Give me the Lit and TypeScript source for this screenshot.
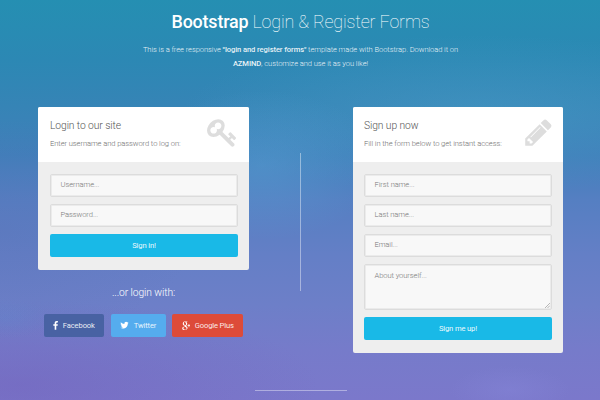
import { LitElement, html, svg, css } from "lit";
import { customElement } from "lit/decorators.js";

const KEY = svg`<path d="M832 512q0-80-56-136t-136-56-136 56-56 136q0 42 19 83-41-19-83-19-80 0-136 56t-56 136 56 136 136 56 136-56 56-136q0-42-19-83 41 19 83 19 80 0 136-56t56-136zm851 704q0 17-49 66t-66 49q-9 0-28.5-16t-36.5-33-38.5-40-24.5-26l-96 96 220 220q28 28 28 68 0 42-39 81t-81 39q-40 0-68-28l-671-671q-176 131-365 131-163 0-265.5-102.5t-102.5-265.5q0-160 95-313t248-248 313-95q163 0 265.5 102.5t102.5 265.5q0 189-131 365l355 355 96-96q-3-3-26-24.5t-40-38.5-33-36.5-16-28.5q0-17 49-66t66-49q13 0 23 10 6 6 46 44.5t82 79.5 86.5 86 73 78 28.5 41z"/>`;
const PENCIL = svg`<path d="M491 1536l91-91-235-235-91 91v107h128v128h107zm523-928q0-22-22-22-10 0-17 7l-542 542q-7 7-7 17 0 22 22 22 10 0 17-7l542-542q7-7 7-17zm-54-192l416 416-832 832h-416v-416zm683 96q0 53-37 90l-166 166-416-416 166-165q36-38 90-38 53 0 91 38l235 234q37 39 37 91z"/>`;
const FACEBOOK = svg`<path d="M1343 12v264h-157q-86 0-116 36t-30 108v189h293l-39 296h-254v759h-306v-759h-255v-296h255v-218q0-186 104-288.5t277-102.5q147 0 228 12z"/>`;
const TWITTER = svg`<path d="M1684 408q-67 98-162 167 1 14 1 42 0 130-38 259.5t-115.5 248.5-184.5 210.5-258 146-323 54.5q-271 0-496-145 35 4 78 4 225 0 401-138-105-2-188-64.5t-114-159.5q33 5 61 5 43 0 85-11-112-23-185.5-111.5t-73.5-205.5v-4q68 38 146 41-66-44-105-115t-39-154q0-88 44-163 121 149 294.5 238.5t371.5 99.5q-8-38-8-74 0-134 94.5-228.5t228.5-94.5q140 0 236 102 109-21 205-78-37 115-142 178 93-10 186-50z"/>`;

@customElement("app-root")
export class AppRoot extends LitElement {
  static styles = css`
    :host {
      display: block;
      width: 600px;
      height: 400px;
      overflow: hidden;
      font-family: Roboto, "Liberation Sans", sans-serif;
      font-weight: 300;
      font-size: 7.6px;
      letter-spacing: -0.09px;
      color: #707070;
      background:
        radial-gradient(ellipse 120px 75px at 262px 165px, rgba(92, 165, 215, 0.4), transparent),
        radial-gradient(ellipse 300px 80px at 480px 115px, rgba(78, 163, 203, 0.4), transparent),
        radial-gradient(ellipse 200px 110px at 0 230px, rgba(90, 112, 182, 0.35), transparent),
        radial-gradient(ellipse 300px 85px at 20px 385px, rgba(112, 92, 184, 0.4), transparent),
        radial-gradient(ellipse 45px 20px at 5px 318px, rgba(95, 138, 208, 0.35), transparent),
        radial-gradient(ellipse 60px 24px at 510px 390px, rgba(135, 135, 218, 0.4), transparent),
        linear-gradient(#258fb2 0, #2c88b4 60px, #3684b6 107px, #407fba 155px, #557fc2 200px, #647fc6 255px, #6d7fc8 305px, #767bca 350px, #7b78cb 400px);
    }
    * { box-sizing: border-box; }
    .page { display: flex; flex-direction: column; height: 400px; }
    h1, h2, p { margin: 0; font-weight: 300; }
    header { text-align: center; height: 107px; padding-top: 10px; color: #fff; }
    h1 { font-size: 17.9px; line-height: 24px; font-weight: 100; white-space: nowrap; letter-spacing: -0.17px; padding-left: 1px; }
    h1 b { font-weight: 500; }
    .intro { margin-top: 9px; line-height: 14px; color: rgba(255, 255, 255, 0.9); padding-left: 1px; }
    .intro b { font-weight: 500; }
    .columns { display: grid; grid-template-columns: 211px 1fr 210px; padding: 0 37px 0 38px; height: 283px; }
    .card { border-radius: 2px; background: #eee; overflow: hidden; }
    .top { background: #fff; height: 55px; padding: 11px 11px 0 12px; display: flex; justify-content: space-between; }
    h2 { font-size: 10.3px; line-height: 15px; color: #555; letter-spacing: -0.09px; }
    .top p { margin-top: 4px; line-height: 14px; white-space: nowrap; }
    .top .icon { width: 31px; height: 31px; fill: #ddd; flex: none; margin-top: -1px; }
    form { padding: 12px 11px 13px 12px; display: flex; flex-direction: column; gap: 7px; }
    .field {
      height: 23px; border: 1px solid #dcdcdc; box-shadow: inset 0 0 0 1px #ebebeb; border-radius: 2px; background: #f8f8f8;
      padding: 0 9.5px; line-height: 20px; color: #777;
    }
    .area { height: 46px; display: flex; justify-content: space-between; padding: 1px 1px 1px 9.5px; }
    .right .top { padding-left: 11px; padding-right: 9px; }
    .right form { padding-left: 11px; }
    .grip { align-self: flex-end; width: 5px; height: 5px; stroke: #999; stroke-width: 0.7; fill: none; }
    .submit {
      height: 23px; border: 0; border-radius: 2px; background: #19b9e7; color: rgba(255, 255, 255, 0.95);
      font: inherit; letter-spacing: -0.14px; font-weight: 400; padding: 0;
    }
    .divider { justify-self: center; width: 1px; height: 138px; margin: 46px 1px 0 0; background: rgba(255, 255, 255, 0.42); }
    .social { text-align: center; color: #fff; padding-top: 15px; }
    .social h2 { color: #fff; }
    .buttons { display: flex; justify-content: center; gap: 6.5px; margin-top: 14px; }
    .btn {
      height: 23px; border-radius: 2px; display: flex; align-items: center; gap: 4.5px; letter-spacing: -0.14px;
      justify-content: center; font-weight: 400; white-space: nowrap; color: rgba(255, 255, 255, 0.9);
    }
    .btn svg { height: 9.5px; fill: #fff; flex: none; margin-top: 1px; }
    .fb { width: 60.5px; background: #4862a3; }
    .tw { width: 55px; background: #55acee; }
    .gp { width: 71px; background: #dd4b39; }
    .rule { width: 92px; height: 1px; align-self: center; margin-left: 1.5px; background: rgba(255, 255, 255, 0.4); }
  `;

  field(label: string) {
    return html`<div class="field">${label}</div>`;
  }

  top(title: string, text: string, icon: unknown) {
    return html`<div class="top">
      <div><h2>${title}</h2><p>${text}</p></div>
      <svg class="icon" viewBox="0 0 1792 1792">${icon}</svg>
    </div>`;
  }

  render() {
    return html`<div class="page">
      <header>
        <h1><b>Bootstrap</b> Login &amp; Register Forms</h1>
        <p class="intro">This is a free responsive <b>"login and register forms"</b> template made with Bootstrap. Download it on<br /><b>AZMIND</b>, customize and use it as you like!</p>
      </header>
      <div class="columns">
        <section>
          <div class="card">
            ${this.top("Login to our site", "Enter username and password to log on:", KEY)}
            <form>
              ${this.field("Username...")} ${this.field("Password...")}
              <button class="submit" type="button">Sign in!</button>
            </form>
          </div>
          <div class="social">
            <h2>...or login with:</h2>
            <div class="buttons">
              <div class="btn fb"><svg viewBox="420 0 960 1792">${FACEBOOK}</svg>Facebook</div>
              <div class="btn tw"><svg viewBox="50 100 1700 1792">${TWITTER}</svg>Twitter</div>
              <div class="btn gp">
                <svg viewBox="0 0 18 20">
                  <path d="M5 1H12L10.6 2.3H9C10.5 3.2 11 4.3 11 5.8C11 7.7 10 8.6 9 9.4C8.3 10.1 8.5 10.5 9.4 11.2C10.9 12.4 11.7 13.5 11.7 15C11.7 17.8 9 19.2 5.7 19.2C2.5 19.2.5 17.8.5 15.7C.5 13.2 3 12 6.4 11.8C5.9 11.2 5.8 10.7 6 10C3.5 10 1.6 8.3 1.6 5.9C1.6 3.3 3.2 1.5 5 1ZM5.8 2.1C4.2 2.1 3.8 3.4 4.1 5.2C4.4 7.3 5.4 8.8 6.9 8.8C8.3 8.7 8.7 7.6 8.4 5.8C8 3.6 7.2 2.1 5.8 2.1ZM6.8 12.8C4.4 12.9 2.9 13.8 2.9 15.3C2.9 16.9 4.4 17.9 6.4 17.9C8.5 17.9 9.5 17 9.5 15.7C9.5 14.3 8.5 13.8 7.3 12.8Z" fill-rule="evenodd" />
                  <path d="M13.9 6.4h1.5v2.5h2.5v1.5h-2.5v2.5h-1.5v-2.5h-2.3V8.9h2.3Z" />
                </svg>Google Plus
              </div>
            </div>
          </div>
        </section>
        <div class="divider"></div>
        <section class="right">
          <div class="card">
            ${this.top("Sign up now", "Fill in the form below to get instant access:", PENCIL)}
            <form>
              ${this.field("First name...")} ${this.field("Last name...")} ${this.field("Email...")}
              <div class="field area">
                About yourself...
                <svg class="grip" viewBox="0 0 5 5"><path d="M0 5L5 0M2.5 5L5 2.5" /></svg>
              </div>
              <button class="submit" type="button">Sign me up!</button>
            </form>
          </div>
        </section>
      </div>
      <div class="rule"></div>
    </div>`;
  }
}
